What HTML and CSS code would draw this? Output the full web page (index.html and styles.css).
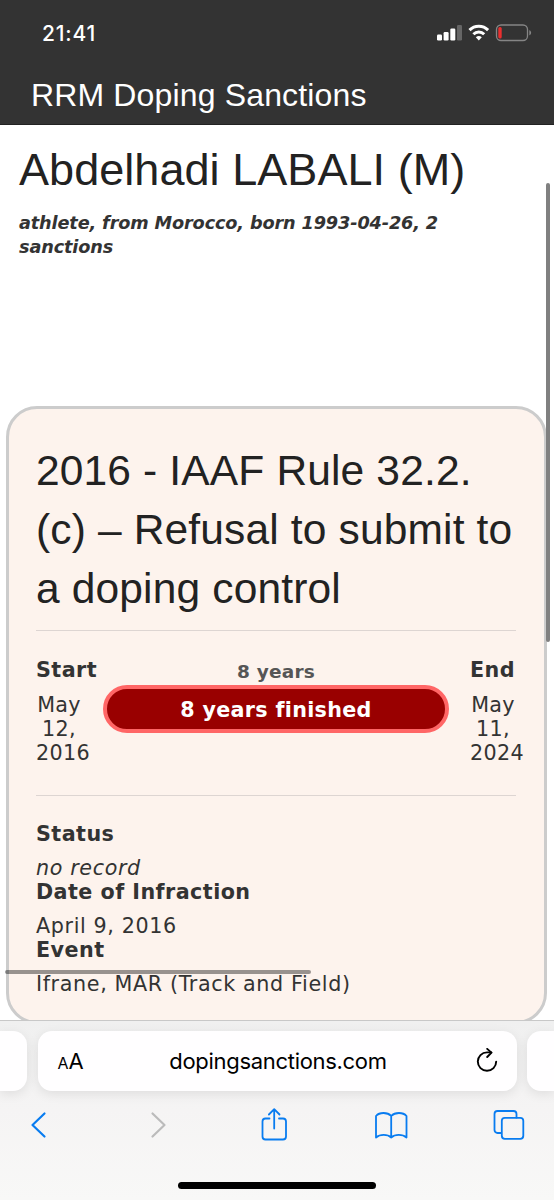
FILE: index.html
```html
<!DOCTYPE html>
<html lang="en">
<head>
  <meta charset="UTF-8" />
  <meta name="viewport" content="width=device-width, initial-scale=1.0" />
  <title>RRM Doping Sanctions</title>
  <link rel="stylesheet" href="styles.css">
</head>
<body>
  <header class="header">
    <div class="status-bar">
      <span class="clock">21:41</span>
      <svg class="status-icons" width="96" height="18" viewBox="0 0 96 18">
        <g fill="#fff">
          <rect x="0" y="10.5" width="5" height="6" rx="1.2"/>
          <rect x="6.6" y="8" width="5" height="8.5" rx="1.2"/>
          <rect x="13.3" y="4.5" width="5" height="12" rx="1.2"/>
          <rect x="20" y="1" width="5" height="15.5" rx="1.2" opacity=".25"/>
        </g>
        <g fill="none" stroke="#fff" stroke-width="3">
          <path d="M32.5 6.1a13.2 13.2 0 0 1 18.6 0"/>
          <path d="M36.4 10.2a7.7 7.7 0 0 1 10.8 0"/>
        </g>
        <path d="M38.8 13.2a4.6 4.6 0 0 1 6 0l-3 3.2z" fill="#fff"/>
        <rect x="59.5" y="1" width="31" height="15.5" rx="4.5" fill="none" stroke="#858585" stroke-width="1.3"/>
        <path d="M92.3 6.2c2.4.6 2.4 4.4 0 5z" fill="#858585"/>
        <rect x="61.3" y="3" width="3.4" height="11.5" rx="1.5" fill="#ea2f2f"/>
      </svg>
    </div>
    <div class="site-title">RRM Doping Sanctions</div>
  </header>

  <main class="main">
    <h1>Abdelhadi LABALI (M)</h1>
    <p class="summary">athlete, from Morocco, born 1993-04-26, 2 sanctions</p>

    <section class="card">
      <h2>2016 - IAAF Rule 32.2.(c) – Refusal to submit to a doping control</h2>

      <div class="period">
        <div class="date">
          <h3>Start</h3>
          <p>May 12, 2016</p>
        </div>
        <div class="duration">
          <div class="years">8 years</div>
          <div class="progress">8 years finished</div>
        </div>
        <div class="date">
          <h3>End</h3>
          <p>May 11, 2024</p>
        </div>
      </div>

      <div class="details">
        <h3>Status</h3>
        <p><em>no record</em></p>
        <h3>Date of Infraction</h3>
        <p>April 9, 2016</p>
        <h3>Event</h3>
        <p>Ifrane, MAR (Track and Field)</p>
      </div>
    </section>

    <div class="scroll-y"></div>
    <div class="scroll-x"></div>
  </main>

  <footer class="browser">
    <div class="tabs">
      <div class="tab-edge left"></div>
      <div class="address">
        <span class="text-size"><small>A</small>A</span>
        <span class="url">dopingsanctions.com</span>
        <svg class="reload" width="24" height="26" viewBox="0 0 24 26" fill="none" stroke="#000" stroke-width="1.9" stroke-linecap="round" stroke-linejoin="round">
          <path d="M21.200 13.600a9.200 9.200 0 1 1-9.200-9.200h4.300"/>
          <path d="M12.200 .900l4.300 3.700-4.300 4.400"/>
        </svg>
      </div>
      <div class="tab-edge right"></div>
    </div>
    <nav class="toolbar">
      <svg width="32" height="36" viewBox="0 0 32 36"><path d="M22.500 6.500L10.500 18l12 11.500"/></svg>
      <svg class="disabled" width="32" height="36" viewBox="0 0 32 36"><path d="M13.500 6.500L25.500 18l-12 11.500"/></svg>
      <svg class="thin" width="32" height="36" viewBox="0 0 32 36">
        <path d="M12.500 11.500H8.500a3 3 0 0 0-3 3V29.500a3 3 0 0 0 3 3H26a3 3 0 0 0 3-3V14.500a3 3 0 0 0-3-3H22"/>
        <path d="M17.200 21.500V2.500M11.900 7.500l5.300-5.300 5.300 5.300"/>
      </svg>
      <svg class="thin" width="34" height="36" viewBox="0 0 34 36">
        <path d="M17.200 9C13.500 5 5.500 5 2 9v21.500c4-3.500 11.500-3.500 15.200 0C21 27 28.500 27 32.500 30.500V9C29 5 21 5 17.200 9zV30.500"/>
      </svg>
      <svg class="thin" width="32" height="36" viewBox="0 0 32 36">
        <path d="M7.800 26H4.500a3 3 0 0 1-3-3V7a3 3 0 0 1 3-3H20.500a3 3 0 0 1 3 3V10.500"/>
        <rect x="8.800" y="10.800" width="21.500" height="21" rx="3"/>
      </svg>
    </nav>
    <div class="home-indicator"></div>
  </footer>
</body>
</html>
```
FILE: styles.css
```css
* {
  box-sizing: border-box;
}

html, body {
  margin: 0;
  padding: 0;
  height: 100%;
}

body {
  display: flex;
  flex-direction: column;
  overflow: hidden;
  background: #fff;
  color: #333;
  font-family: Verdana, "DejaVu Sans", sans-serif;
  font-size: 20.7px;
  line-height: 24px;
}

h1, h2, h3, p {
  margin: 0;
}

.header {
  flex: none;
  height: 125px;
  background: #333;
  border-bottom: 1px solid #222;
  color: #fff;
}

.status-bar {
  display: flex;
  justify-content: space-between;
  align-items: center;
  height: 66px;
  padding: 0 21px 0 42px;
}

.clock {
  padding-top: 2px;
  font-family: Inter, sans-serif;
  font-size: 21px;
  font-weight: 500;
  letter-spacing: 0.8px;
}

.site-title {
  padding-left: 31px;
  font-family: "Liberation Sans", Arial, sans-serif;
  font-size: 32px;
  line-height: 58px;
  letter-spacing: 0.15px;
}

.main {
  position: relative;
  flex: 1;
  min-height: 0;
  overflow: hidden;
}

h1, h2 {
  color: #222;
  font-family: "Liberation Sans", Arial, sans-serif;
  font-weight: normal;
}

h1 {
  padding: 18px 19px 0;
  font-size: 45px;
  line-height: 54px;
  letter-spacing: 0.05px;
}

.summary {
  width: 480px;
  padding: 14px 19px 0;
  font-size: 17.7px;
  font-weight: bold;
  font-style: italic;
  letter-spacing: -0.14px;
}

.card {
  height: 618px;
  margin: 147px 7px 0 6px;
  padding: 32px 28px 0 27px;
  border: 3px solid #ccc;
  border-radius: 31px;
  background: #fdf3ed;
}

h2 {
  padding-bottom: 12px;
  border-bottom: 1px solid #ddd5d2;
  font-size: 42.5px;
  line-height: 59px;
  letter-spacing: 0.15px;
}

h3 {
  font-size: 20.7px;
  line-height: 24px;
  letter-spacing: 0.45px;
}

.period {
  display: grid;
  grid-template-columns: 67px 346px 46px;
  column-gap: 0;
  height: 165px;
  padding-top: 27px;
  border-bottom: 1px solid #ddd5d2;
}

.date:last-child {
  margin-left: 21px;
}

.date p {
  width: 46px;
  padding-top: 11px;
  text-align: center;
  letter-spacing: 0.3px;
}

.duration {
  padding-top: 2px;
  font-weight: bold;
  text-align: center;
}

.years {
  color: #555;
  font-size: 18.5px;
  letter-spacing: 0.2px;
}

.progress {
  height: 48px;
  margin-top: 1px;
  border: 4px solid #f66;
  border-radius: 24px;
  background: #900;
  color: #fff;
  line-height: 42px;
  letter-spacing: 0.3px;
}

.details {
  padding-top: 26px;
}

.details p {
  padding-top: 10px;
  letter-spacing: 0.62px;
}

.scroll-y {
  position: absolute;
  top: 58px;
  right: 4px;
  width: 4px;
  height: 459px;
  border-radius: 2px;
  background: #808080;
}

.scroll-x {
  position: absolute;
  top: 845px;
  left: 5px;
  width: 306px;
  height: 4px;
  border-radius: 2px;
  background: rgba(0, 0, 0, 0.4);
}

.browser {
  flex: none;
  height: 180px;
  border-top: 1px solid #c8c8c8;
  background: linear-gradient(#f0f0f0, #f5f4f4 50%, #f8f8f7);
}

.tabs {
  display: flex;
  justify-content: space-between;
  height: 60px;
  margin-top: 10px;
}

.address, .tab-edge {
  background: #fffeff;
  box-shadow: 0 3px 12px rgba(0, 0, 0, 0.09);
}

.address {
  display: flex;
  justify-content: space-between;
  align-items: center;
  width: 479px;
  padding: 0 17px 0 20px;
  border-radius: 14px;
  color: #000;
  font-family: Inter, sans-serif;
}

.text-size {
  width: 28px;
  padding-top: 2px;
  font-size: 22px;
}

.text-size small {
  font-size: 16px;
}

.url {
  margin-right: 5px;
  font-size: 22px;
  letter-spacing: -0.3px;
}

.tab-edge {
  width: 27px;
}

.left {
  border-radius: 0 14px 14px 0;
}

.right {
  border-radius: 14px 0 0 14px;
}

.toolbar {
  display: flex;
  justify-content: space-between;
  padding: 16px 29px 0 22px;
}

.toolbar svg {
  fill: none;
  stroke: #087cf0;
  stroke-width: 2.2;
  stroke-linecap: round;
  stroke-linejoin: round;
}

.toolbar .thin {
  stroke-width: 1.8;
}

.toolbar .disabled {
  stroke: #bbb;
}

.home-indicator {
  width: 198px;
  height: 7px;
  margin: 39px auto 0;
  border-radius: 4px;
  background: #000;
}
```
